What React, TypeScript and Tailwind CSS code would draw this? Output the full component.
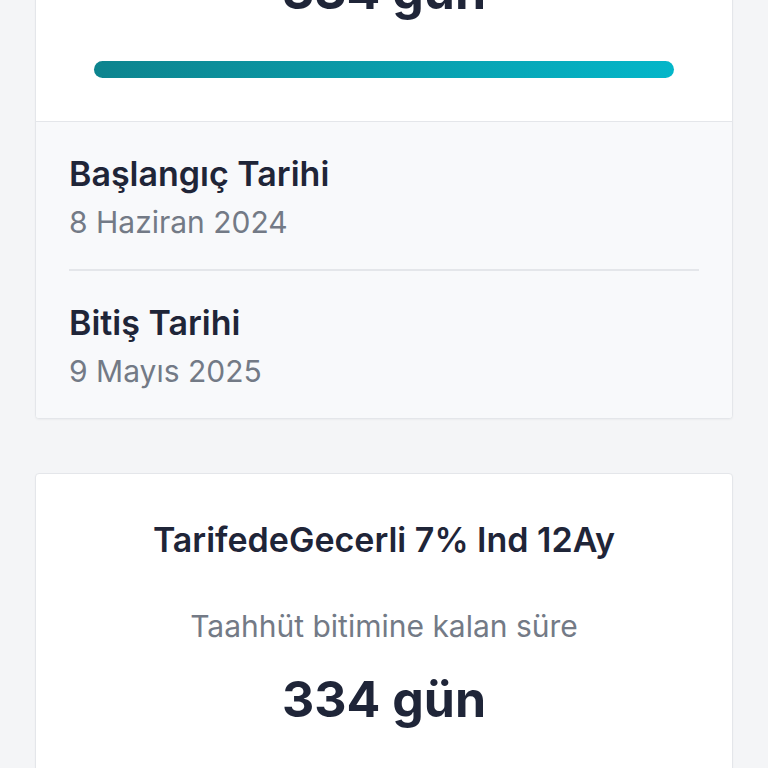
import React from "react";

function Card({ title, showDates }: { title: string; showDates: boolean }) {
  return (
    <div className="rounded-[4px] border border-[#e4e6ea] bg-white shadow-[0_1px_2px_rgba(0,0,0,0.04)] overflow-hidden">
      <div className="flex flex-col items-center px-[58px] pt-[46px] pb-[43px]">
        <div className="text-[34px] leading-[40px] font-semibold text-[#1f2538]">{title}</div>
        <div className="mt-[48px] text-[30px] leading-[36px] text-[#737a86]">Taahhüt bitimine kalan süre</div>
        <div className="mt-[25px] text-[50px] leading-[60px] font-bold text-[#1f2538]">334 gün</div>
        <div className="mt-[40px] h-[17px] w-full rounded-full bg-gradient-to-r from-[#0d848e] to-[#03b6c9]" />
      </div>
      {showDates && (
        <div className="border-t border-[#e4e6ea] bg-[#f8f9fb] px-[33px]">
          <div className="border-b-2 border-[#e4e6ea] pt-[32px] pb-[29px]">
            <div className="text-[34px] leading-[40px] font-semibold text-[#1f2538]">Başlangıç Tarihi</div>
            <div className="mt-[10px] text-[30px] leading-[36px] text-[#737a86]">8 Haziran 2024</div>
          </div>
          <div className="pt-[32px] pb-[29px]">
            <div className="text-[34px] leading-[40px] font-semibold text-[#1f2538]">Bitiş Tarihi</div>
            <div className="mt-[10px] text-[30px] leading-[36px] text-[#737a86]">9 Mayıs 2025</div>
          </div>
        </div>
      )}
    </div>
  );
}

export default function App() {
  return (
    <div
      className="min-h-[768px] h-[768px] overflow-hidden bg-[#f4f5f7]"
      style={{ fontFamily: "Inter, 'Noto Sans', sans-serif" }}
    >
      <div className="mx-[35px] mt-[-235px] flex flex-col gap-[54px]">
        <Card title="TarifedeGecerli 7% Ind 12Ay" showDates={true} />
        <Card title="TarifedeGecerli 7% Ind 12Ay" showDates={false} />
      </div>
    </div>
  );
}
